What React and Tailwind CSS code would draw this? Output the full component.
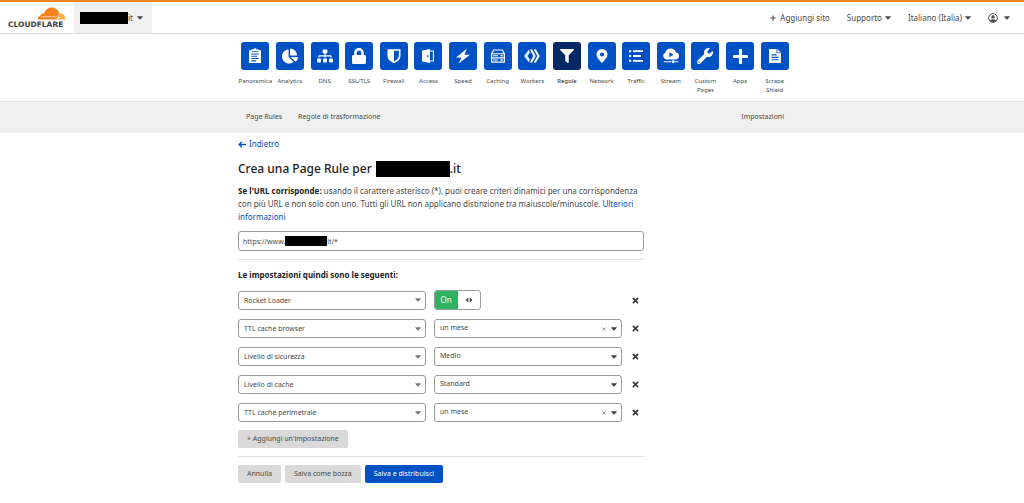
import { FaChartPie, FaSitemap, FaLock, FaFilter, FaWrench, FaPlus } from "react-icons/fa";

const Icon = ({ children, size = "size-4" }) => (
  <svg viewBox="0 0 16 16" className={size} fill="currentColor" aria-hidden="true">
    {children}
  </svg>
);

const ClipboardIcon = () => (
  <Icon>
    <path
      fillRule="evenodd"
      d="M2 2.200H4.500V1.200h2.100a1.500 1.500 0 0 1 2.800 0h2.100v1H14V15H2ZM4.300 5.400v1.100h7.400V5.400Zm0 2.300v1.100h5.700V7.700Zm0 2.300v1.100h7.400V10Zm0 2.300v1.100H9v-1.100ZM4.800 3.200v.8h6.400v-.8Z"
    />
  </Icon>
);

const ShieldIcon = () => (
  <Icon>
    <path fillRule="evenodd" d="M1.500 1.200h13v6.300c0 3.700-2.700 6.100-6.500 7.700-3.800-1.600-6.500-4-6.500-7.700ZM8 2.800v10.600c3-1.400 4.900-3.200 4.900-6V2.800Z" />
  </Icon>
);

const DoorIcon = () => (
  <Icon>
    <path fillRule="evenodd" d="M2 2.400 10 1v14L2 13.600ZM7.300 7.200v1.800h1.300V7.200Z" />
    <path d="M10 2.400h4v11.200h-4v-1.100h2.900v-9H10Z" />
  </Icon>
);

const BoltIcon = () => (
  <Icon>
    <path d="M11.800.800 1 9.600l5.400-.1L3.600 15.400 15 6.700l-5.600.1Z" />
  </Icon>
);

const ServerIcon = () => (
  <Icon>
    <path
      fillRule="evenodd"
      d="M3.200 1.500h9.600L15 5.800v8.200a.8.8 0 0 1-.8.8H1.800A.8.8 0 0 1 1 14V5.800ZM3.900 2.600 2.600 5.200h10.800l-1.300-2.600ZM2.200 6.300v2.900h11.600V6.300Zm0 4.100v3.200h11.600v-3.200Z"
    />
    <path d="M3 7.200h5v1H3ZM10.500 7h2.300v1.400h-2.300ZM3 11.500h5v1H3ZM10.500 11.300h2.300v1.400h-2.300Z" />
  </Icon>
);

const WorkersIcon = () => (
  <Icon>
    <path d="M4.600 1.900 6 4.300 3.300 8 6 11.700 4.600 14.100.2 8ZM5.900 1.400h2.200L11.700 8l-3.600 6.600H5.900L9.400 8ZM9.700 1.400h2.200L15.800 8l-3.900 6.600H9.700L13.300 8Z" />
  </Icon>
);

const PinIcon = () => (
  <Icon>
    <path fillRule="evenodd" d="M8 1a5.500 5.500 0 0 1 5.500 5.500C13.500 9.600 10 12.500 8 15.300 6 12.500 2.500 9.600 2.500 6.500A5.500 5.500 0 0 1 8 1Zm0 3.400a2.100 2.100 0 1 0 0 4.200 2.100 2.100 0 0 0 0-4.200Z" />
  </Icon>
);

const ListIcon = () => (
  <Icon>
    <path d="M1 2.200h2.200v2H1ZM1 7h2.200v2H1ZM1 11.800h2.200v2H1ZM5 2.300h10v1.800H5ZM5 7.100h8v1.800H5ZM5 11.900h10v1.800H5Z" />
  </Icon>
);

const StreamIcon = () => (
  <Icon size="size-[18px]">
    <path fillRule="evenodd" d="M3.600 11A3.200 3.200 0 0 1 3 4.900a4.900 4.900 0 0 1 9.400-.1A3.150 3.150 0 0 1 12.600 11ZM6.500 4.700v4.400L10.200 6.900Z" />
    <path d="M1.500 12.700h7v.9h-7ZM11.500 12.700h3v.9h-3Z" />
    <circle cx="10" cy="13.100" r="1.300" />
  </Icon>
);

const DocumentIcon = () => (
  <Icon>
    <path fillRule="evenodd" d="M2 1h7.500v4.200H14V15H2ZM4.500 6.300v1.100h5V6.300Zm0 2.500v1.100h7V8.800Zm0 2.400v1.100h7v-1.100Z" />
    <path d="M10.400 1 14 4.400h-3.600Z" />
  </Icon>
);

const Caret = ({ className = "" }) => (
  <svg viewBox="0 0 6 4" className={`h-1 w-1.5 shrink-0 ${className}`} fill="currentColor" aria-hidden="true">
    <path d="M.4.200h5.200a.3.300 0 0 1 .2.500L3.300 3.600a.4.400 0 0 1-.6 0L.2.700A.3.300 0 0 1 .4.200Z" />
  </svg>
);

const CrossIcon = ({ className }) => (
  <svg viewBox="0 0 8 8" className={className} stroke="currentColor" strokeWidth="1.700" aria-hidden="true">
    <path d="M1 1 7 7M7 1 1 7" />
  </svg>
);

const Logo = () => (
  <svg viewBox="0 0 116 42" className="h-[21px] w-[58px]" role="img" aria-label="Cloudflare">
    <path
      fill="#f6821f"
      d="M59.500 25c-.8-4 1.700-6.800 5.500-7-.4-4 3.400-6.400 6.800-4.600C74 5.400 80.500.800 87.500.800c7.500 0 13.300 4.800 15 12 .4 2.600-.6 5-2 7.600-1.800 3.200-2.400 4.600-5 4.600Z"
    />
    <path fill="#fbad41" d="M104 12.500c6.600 0 11.200 5 10.600 12-.1.400-.4.500-.8.500H98.500c2.400-4.600 5-3.600 8.500-4.200-2.600-.6-6-.2-6.800-1.200.4-2.400 2-5.600 3.800-7.100Z" />
    <path fill="none" stroke="#fff" strokeWidth="1.200" d="M66 19.400c10 .2 22-.4 31.400.4M103.200 12.800 97 25.500" />
    <text x="0" y="39" fontFamily="'DejaVu Sans', sans-serif" fontSize="15" fontWeight="700" fill="#404041">
      CLOUDFLARE
    </text>
  </svg>
);

const Redacted = ({ className }) => <span className={`inline-block shrink-0 bg-black ${className}`} />;

const sections = [
  { label: "Panoramica", icon: <ClipboardIcon /> },
  { label: "Analytics", icon: <FaChartPie className="size-4" /> },
  { label: "DNS", icon: <FaSitemap className="size-4" /> },
  { label: "SSL/TLS", icon: <FaLock className="size-4" /> },
  { label: "Firewall", icon: <ShieldIcon /> },
  { label: "Access", icon: <DoorIcon /> },
  { label: "Speed", icon: <BoltIcon /> },
  { label: "Caching", icon: <ServerIcon /> },
  { label: "Workers", icon: <WorkersIcon /> },
  { label: "Regole", icon: <FaFilter className="size-[14px]" />, active: true },
  { label: "Network", icon: <PinIcon /> },
  { label: "Traffic", icon: <ListIcon /> },
  { label: "Stream", icon: <StreamIcon /> },
  { label: "Custom Pages", icon: <FaWrench className="size-4" /> },
  { label: "Apps", icon: <FaPlus className="size-[17px]" /> },
  { label: "Scrape Shield", icon: <DocumentIcon /> },
];

const rules = [
  { setting: "Rocket Loader", toggle: true },
  { setting: "TTL cache browser", value: "un mese", clearable: true },
  { setting: "Livello di sicurezza", value: "Medio" },
  { setting: "Livello di cache", value: "Standard" },
  { setting: "TTL cache perimetrale", value: "un mese", clearable: true },
];

function Select({ label, value, clearable, dark }) {
  return (
    <div className="relative h-[19px] w-full">
      <select
        aria-label={label}
        defaultValue={value}
        className={`block h-full w-full appearance-none rounded-[3px] border border-[#9a9a9a] bg-white pr-6 pl-[5px] text-[7px] text-[#4a4a4a] ${dark ? "" : "pt-0.5"}`}
      >
        <option>{value}</option>
      </select>
      <span className={`pointer-events-none absolute inset-y-0 right-[5px] flex items-center ${dark ? "text-[#404040]" : "text-[#777]"}`}>
        <Caret />
      </span>
      {clearable && (
        <button type="button" aria-label={`Cancella ${label}`} className="absolute inset-y-0 right-4 flex items-center text-[#888]">
          <CrossIcon className="size-1" />
        </button>
      )}
    </div>
  );
}

function Toggle() {
  return (
    <div className="flex h-5 w-[47px] overflow-hidden rounded-[3px] border border-[#9a9a9a] text-[8px]">
      <button type="button" aria-pressed="true" className="-my-px -ml-px w-6 shrink-0 bg-[#2db35e] text-white">
        On
      </button>
      <button type="button" aria-label="Off" className="flex flex-1 items-center justify-center text-[#404040]">
        <svg viewBox="0 0 8 6" className="h-1.5 w-2" fill="currentColor" aria-hidden="true">
          <path d="M3.300.500v5L.7 3ZM4.700.500v5L7.300 3Z" />
        </svg>
      </button>
    </div>
  );
}

export default function App() {
  return (
    <div className="min-h-screen bg-white font-['Noto_Sans','Open_Sans',sans-serif] text-[8px] text-[#4a4a4a]">
      <header className="flex h-[34px] items-stretch border-t-2 border-b border-t-[#f6821f] border-b-[#dcdcdc]">
        <a href="#home" className="flex w-[74px] items-center pl-2">
          <Logo />
        </a>
        <button type="button" className="flex w-[78px] items-center bg-[#f0f0f0] pl-1.5">
          <Redacted className="h-3 w-12" />
          <span>it</span>
          <Caret className="ml-1" />
        </button>
        <nav className="ml-auto flex items-center gap-[17px] pr-3.5">
          <button type="button" className="flex items-center gap-1">
            <FaPlus className="size-1.5" />
            Aggiungi sito
          </button>
          <button type="button" className="flex items-center gap-[3px]">
            Supporto
            <Caret />
          </button>
          <button type="button" className="flex items-center gap-[3px]">
            Italiano (Italia)
            <Caret />
          </button>
          <button type="button" aria-label="Account" className="flex items-center gap-1.5">
            <svg viewBox="0 0 10 10" className="size-2.5" aria-hidden="true">
              <circle cx="5" cy="5" r="4.300" fill="none" stroke="currentColor" strokeWidth="1" />
              <circle cx="5" cy="3.900" r="1.700" fill="currentColor" />
              <path d="M1.800 7.700C2.700 6.400 3.800 6.200 5 6.200s2.300.200 3.200 1.500A4.200 4.200 0 0 1 5 9.200a4.200 4.200 0 0 1-3.200-1.500Z" fill="currentColor" />
            </svg>
            <Caret />
          </button>
        </nav>
      </header>

      <nav className="border-b border-[#e4e4e4] pt-2 pb-1.5 pl-1.5">
        <ul className="mx-auto grid max-w-[554px] grid-cols-16">
          {sections.map((s) => (
            <li key={s.label}>
              <a href="#section" className="flex flex-col items-center text-center">
                <span
                  className={`flex size-7 items-center justify-center rounded-[3px] text-white ${s.active ? "bg-[#062763]" : "bg-[#0051c3]"}`}
                >
                  {s.icon}
                </span>
                <span className={`mt-[7px] h-[18px] text-[6px] leading-[9px] ${s.active ? "text-[#222]" : ""}`}>{s.label}</span>
              </a>
            </li>
          ))}
        </ul>
      </nav>

      <nav className="bg-[#f0f0f0] pl-1.5 text-[7px]">
        <div className="mx-auto flex h-[31px] max-w-[554px] items-center gap-4 px-2">
          <a href="#rules">Page Rules</a>
          <a href="#transform">Regole di trasformazione</a>
          <a href="#settings" className="ml-auto">
            Impostazioni
          </a>
        </div>
      </nav>

      <main className="pl-1.5">
        <div className="mx-auto max-w-[554px] pt-1">
          <form className="max-w-[406px]" onSubmit={(e) => e.preventDefault()}>
            <a href="#back" className="flex h-[14px] items-center gap-[3px] text-[8px] text-[#0051c3]">
              <svg viewBox="0 0 8 7" className="h-[7px] w-2" fill="none" stroke="currentColor" strokeWidth="1.300" aria-hidden="true">
                <path d="M8 3.500H1.200M3.800.800 1.100 3.500l2.700 2.700" />
              </svg>
              Indietro
            </a>
            <h1 className="mt-2 flex h-5 items-center text-[12px] font-medium text-[#222]">
              Crea una Page Rule per
              <Redacted className="ml-1 h-4 w-[74px]" />
              .it
            </h1>
            <p className="mt-[5px] text-[8px] leading-[13px]">
              <label htmlFor="url" className="font-bold text-[#222]">
                Se l'URL corrisponde:
              </label>{" "}
              usando il carattere asterisco (*), puoi creare criteri dinamici per una corrispondenza con più URL e non solo con
              uno. Tutti gli URL non applicano distinzione tra maiuscole/minuscole.{" "}
              <a href="#more" className="text-[#0051c3]">
                Ulteriori informazioni
              </a>
            </p>
            <div className="relative mt-2 h-5">
              <input
                id="url"
                type="text"
                defaultValue={"https://www." + "\u00a0".repeat(22) + ".it/*"}
                className="block h-full w-full rounded-[3px] border border-[#9a9a9a] px-1 text-[7px]"
              />
              <Redacted className="absolute top-[5px] left-[47px] h-[10px] w-[42px]" />
            </div>
            <hr className="mt-2 border-[#dedede]" />
            <h2 className="mt-2 h-[14px] text-[8px] leading-[14px] font-bold text-[#222]">Le impostazioni quindi sono le seguenti:</h2>

            <ul className="mt-2 flex flex-col gap-[9px]">
              {rules.map((r) => (
                <li key={r.setting} className="flex items-center gap-2">
                  <div className="flex-1">
                    <Select label="Impostazione" value={r.setting} />
                  </div>
                  <div className="flex-1">{r.toggle ? <Toggle /> : <Select label={r.setting} value={r.value} clearable={r.clearable} dark />}</div>
                  <button type="button" aria-label={`Rimuovi ${r.setting}`} className="mr-1 flex w-2.5 justify-center text-[#333]">
                    <CrossIcon className="size-[7px]" />
                  </button>
                </li>
              ))}
            </ul>

            <button type="button" className="mt-2 h-[18px] rounded-xs bg-[#d9d9d9] px-[9px] text-[7px]">
              + Aggiungi un'impostazione
            </button>
            <hr className="mt-2 border-[#dedede]" />
            <div className="mt-2 flex gap-1 pb-5 text-[7px]">
              <button type="button" className="h-[18px] rounded-xs bg-[#d9d9d9] px-[9px]">
                Annulla
              </button>
              <button type="button" className="h-[18px] rounded-xs bg-[#d9d9d9] px-[9px]">
                Salva come bozza
              </button>
              <button type="submit" className="h-[18px] rounded-xs bg-[#0051c3] px-[9px] text-white">
                Salva e distribuisci
              </button>
            </div>
          </form>
        </div>
      </main>
    </div>
  );
}
